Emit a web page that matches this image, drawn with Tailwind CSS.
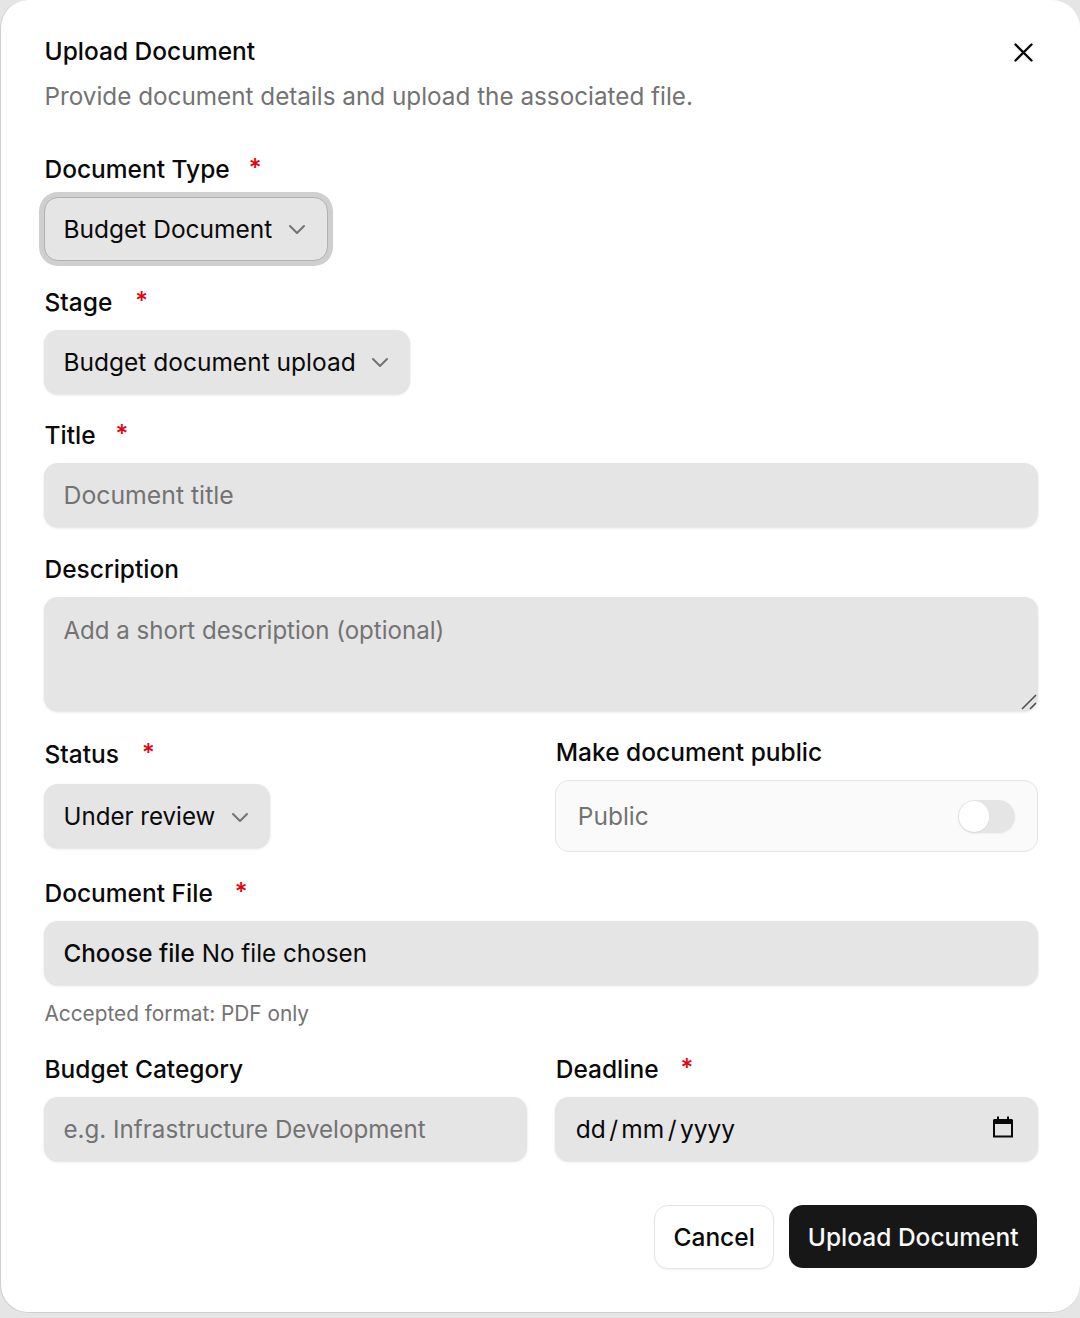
<!DOCTYPE html>
<html lang="en">
<head>
  <meta charset="UTF-8" />
  <title>Upload Document</title>
  <script src="https://cdn.jsdelivr.net/npm/@tailwindcss/browser@4"></script>
</head>
<body class="bg-[#e5e5e5] font-['Inter',sans-serif] text-[#0a0a0a] h-[1318px] overflow-hidden">
  <!-- Dialog -->
  <div class="relative bg-white h-[1313px] rounded-[28px] border-l-[1.5px] border-b-[1.5px] border-[#cfcfcf] pl-[42.5px] pr-[42px] pt-[34px]">
    <button class="absolute top-[42px] right-[46px] text-[#0a0a0a]">
      <svg class="w-[21px] h-[21px]" viewBox="0 0 21 21" fill="none" stroke="currentColor" stroke-width="2.4" stroke-linecap="round"><path d="M2.5 2.5l16 16M18.5 2.5l-16 16"/></svg>
    </button>

    <h2 class="pl-[1px] text-[24.5px] leading-[34px] font-medium">Upload Document</h2>
    <p class="pl-[1px] mt-[11px] text-[24.27px] leading-[34px] text-[#737373]">Provide document details and upload the associated file.</p>

    <!-- Document type -->
    <label class="pl-[1px] mt-[39px] flex gap-[19px] text-[24.5px] leading-[34px] font-medium">Document Type <span class="text-[#e7000b] -translate-y-[2px]">*</span></label>
    <div class="mt-[11px] w-fit h-[64px] flex items-center gap-[16px] pl-[19px] pr-[20.5px] rounded-[14px] bg-[#e5e5e5] border-[1.5px] border-[#b0b0b0] ring-[5px] ring-[#cfcfcf] text-[24.5px]">
      Budget Document
      <svg class="w-[18px] h-[18px] text-[#737373]" viewBox="0 0 18 18" fill="none" stroke="currentColor" stroke-width="2" stroke-linecap="round" stroke-linejoin="round"><path d="M2 6l7 7 7-7"/></svg>
    </div>

    <!-- Stage -->
    <label class="pl-[1px] mt-[24px] flex gap-[23px] text-[24.5px] leading-[34px] font-medium">Stage <span class="text-[#e7000b] -translate-y-[2px]">*</span></label>
    <div class="mt-[11px] w-fit h-[64px] flex items-center gap-[15px] pl-[20px] pr-[21px] rounded-[14px] bg-[#e5e5e5] shadow-sm text-[24.5px]">
      Budget document upload
      <svg class="w-[18px] h-[18px] text-[#737373]" viewBox="0 0 18 18" fill="none" stroke="currentColor" stroke-width="2" stroke-linecap="round" stroke-linejoin="round"><path d="M2 6l7 7 7-7"/></svg>
    </div>

    <!-- Title -->
    <label class="pl-[1px] mt-[24px] flex gap-[20px] text-[24.5px] leading-[34px] font-medium">Title <span class="text-[#e7000b] -translate-y-[2px]">*</span></label>
    <input placeholder="Document title" class="mt-[11px] w-full h-[64px] px-[20px] rounded-[14px] bg-[#e5e5e5] shadow-sm text-[24.8px] placeholder:text-[#737373] outline-none" />

    <!-- Description -->
    <label class="pl-[1px] mt-[25px] block text-[24.5px] leading-[34px] font-medium">Description</label>
    <div class="relative mt-[11px]">
      <textarea placeholder="Add a short description (optional)" class="block w-full h-[114px] px-[20px] py-[17px] rounded-[14px] bg-[#e5e5e5] shadow-sm text-[24.05px] leading-[34px] placeholder:text-[#737373] outline-none resize-none"></textarea>
      <svg class="absolute right-[1px] bottom-[1px] w-[16px] h-[16px] text-[#525252]" viewBox="0 0 16 16" fill="none" stroke="currentColor" stroke-width="1.6"><path d="M1 15L15 1M9 15l6-6"/></svg>
    </div>

    <!-- Status / public -->
    <div class="mt-[24px] grid grid-cols-2 gap-x-[28px]">
      <div>
        <label class="pl-[1px] mt-[2px] flex gap-[23px] text-[24.5px] leading-[34px] font-medium">Status <span class="text-[#e7000b] -translate-y-[2px]">*</span></label>
        <div class="mt-[13px] w-fit h-[64px] flex items-center gap-[16px] pl-[20px] pr-[21px] pt-[2px] rounded-[14px] bg-[#e5e5e5] shadow-sm text-[24.1px]">
          Under review
          <svg class="w-[18px] h-[18px] text-[#737373]" viewBox="0 0 18 18" fill="none" stroke="currentColor" stroke-width="2" stroke-linecap="round" stroke-linejoin="round"><path d="M2 6l7 7 7-7"/></svg>
        </div>
      </div>
      <div>
        <label class="pl-[1px] block text-[24.5px] leading-[34px] font-medium">Make document public</label>
        <div class="mt-[11px] h-[72px] flex items-center justify-between pl-[22px] pr-[22px] rounded-[14px] bg-[#fafafa] border border-[#e5e5e5] text-[24.5px] text-[#737373]">
          Public
          <span class="w-[57px] h-[33px] p-[1px] rounded-full bg-[#e5e5e5] shadow-xs">
            <span class="block w-[30px] h-[31px] rounded-full bg-white shadow-xs"></span>
          </span>
        </div>
      </div>
    </div>

    <!-- File -->
    <label class="pl-[1px] mt-[24px] flex gap-[22px] text-[24.5px] leading-[34px] font-medium">Document File <span class="text-[#e7000b] -translate-y-[2px]">*</span></label>
    <div class="mt-[11px] h-[64px] flex items-center gap-[7px] px-[20px] pt-[2px] rounded-[14px] bg-[#e5e5e5] shadow-sm text-[24.25px]">
      <span class="font-medium">Choose file</span> No file chosen
    </div>
    <p class="pl-[1px] mt-[14px] text-[20.8px] leading-[30px] text-[#737373]">Accepted format: PDF only</p>

    <!-- Budget / deadline -->
    <div class="mt-[23px] grid grid-cols-2 gap-x-[28px]">
      <div>
        <label class="pl-[1px] block text-[24.5px] leading-[34px] font-medium">Budget Category</label>
        <input placeholder="e.g. Infrastructure Development" class="mt-[11px] w-full h-[64px] px-[20px] rounded-[14px] bg-[#e5e5e5] shadow-sm text-[24.15px] placeholder:text-[#737373] outline-none" />
      </div>
      <div>
        <label class="pl-[1px] flex gap-[22px] text-[24.5px] leading-[34px] font-medium">Deadline <span class="text-[#e7000b] -translate-y-[2px]">*</span></label>
        <div class="mt-[11px] h-[64px] flex items-center justify-between pl-[21px] pr-[25px] rounded-[14px] bg-[#e5e5e5] shadow-sm text-[24.5px]">
          <span class="[word-spacing:-3.5px]">dd / mm / yyyy</span>
          <svg class="w-[20px] h-[22px] -translate-y-[2px]" viewBox="0 0 20 22" fill="none" stroke="#0a0a0a"><path d="M1 4.5h18v16H1z" stroke-width="2"/><path d="M1 3h18v5H1z" fill="#0a0a0a" stroke="none"/><path d="M5 0.5v3M15 0.5v3" stroke-width="2"/></svg>
        </div>
      </div>
    </div>

    <!-- Actions -->
    <div class="mt-[44px] flex justify-end gap-[15px] pr-[1px]">
      <button class="h-[64px] px-[18.5px] rounded-[14px] bg-white border border-[#e5e5e5] shadow-xs text-[24.5px] font-medium">Cancel</button>
      <button class="h-[63px] px-[18.5px] pt-[2px] rounded-[14px] bg-[#171717] text-[#fafafa] text-[24.5px] font-medium">Upload Document</button>
    </div>
  </div>
</body>
</html>
